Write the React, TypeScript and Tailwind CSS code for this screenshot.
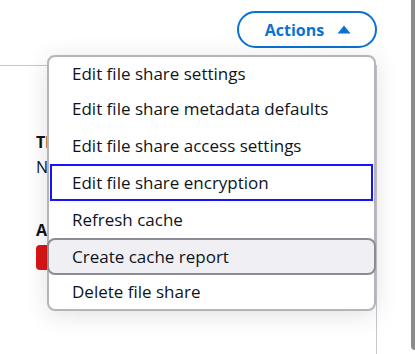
const items = [
  { label: 'Edit file share settings', h: 'h-[34px]', state: '' },
  { label: 'Edit file share metadata defaults', h: 'h-[36px]', state: '' },
  { label: 'Edit file share access settings', h: 'h-[37px]', state: '' },
  { label: 'Edit file share encryption', h: 'h-[37px]', state: 'focus' },
  { label: 'Refresh cache', h: 'h-[37px]', state: '' },
  { label: 'Create cache report', h: 'h-[37px]', state: 'hover' },
  { label: 'Delete file share', h: 'h-[34px]', state: '' },
];

function MenuItem({ label, h, state }: { label: string; h: string; state: string }) {
  let cls = 'border-2 border-transparent pl-[21px]';
  if (state === 'focus') cls = 'border-2 border-[#1414ff] mx-[1px] pl-[20px]';
  if (state === 'hover') cls = 'border-2 border-[#8c8c94] bg-[#f0f0f4] rounded-[8px] -mx-[2px] pl-[23px]';
  return (
    <li className={`${h} ${cls} flex items-center text-[17px] text-[#0f141a] leading-6`}>
      {label}
    </li>
  );
}

export default function App() {
  return (
    <div className="flex h-[354px] w-[415px] overflow-hidden bg-white" style={{ fontFamily: '"Open Sans", Arial, sans-serif' }}>
      <div className="flex flex-1 flex-col">
        <div className="flex justify-end pt-[11px] pr-[34px]">
          <div className="relative">
            <button className="flex h-[37px] w-[140px] items-center justify-center gap-[13px] rounded-full border-2 border-[#0972d3] pl-[2px] text-[16px] font-bold text-[#0972d3]">
              Actions
              <svg width="14" height="9" viewBox="0 0 14 9">
                <path d="M7 0.5 L13.5 8.5 L0.5 8.5 Z" fill="#0972d3" />
              </svg>
            </button>

            <div className="absolute right-[1px] top-[44px] z-10 w-[329px] rounded-[8px] border-2 border-[#b4b4bb] bg-white shadow-[0_4px_24px_rgba(0,0,0,0.12)]">
              <ul>
                {items.map((it) => (
                  <MenuItem key={it.label} {...it} />
                ))}
              </ul>
            </div>
          </div>
        </div>

        <div className="mr-[34px] mt-[17px] flex-1 border-t border-r border-[#c6c6cd] bg-white pl-[36px] pt-[64px] text-[16px] leading-[25px] text-[#0f141a]">
          <p className="font-bold">Throughput</p>
          <p>NFS</p>
          <p className="mt-[38px] font-bold">Audit logs</p>
          <span className="mt-[2px] inline-block h-[25px] rounded-[4px] bg-[#d91515] px-3 text-white">Error</span>
        </div>
      </div>
      <div className="w-[4px]">
        <div className="h-[350px] rounded-bl-[4px] bg-[#8c8c8c]" />
      </div>
    </div>
  );
}
